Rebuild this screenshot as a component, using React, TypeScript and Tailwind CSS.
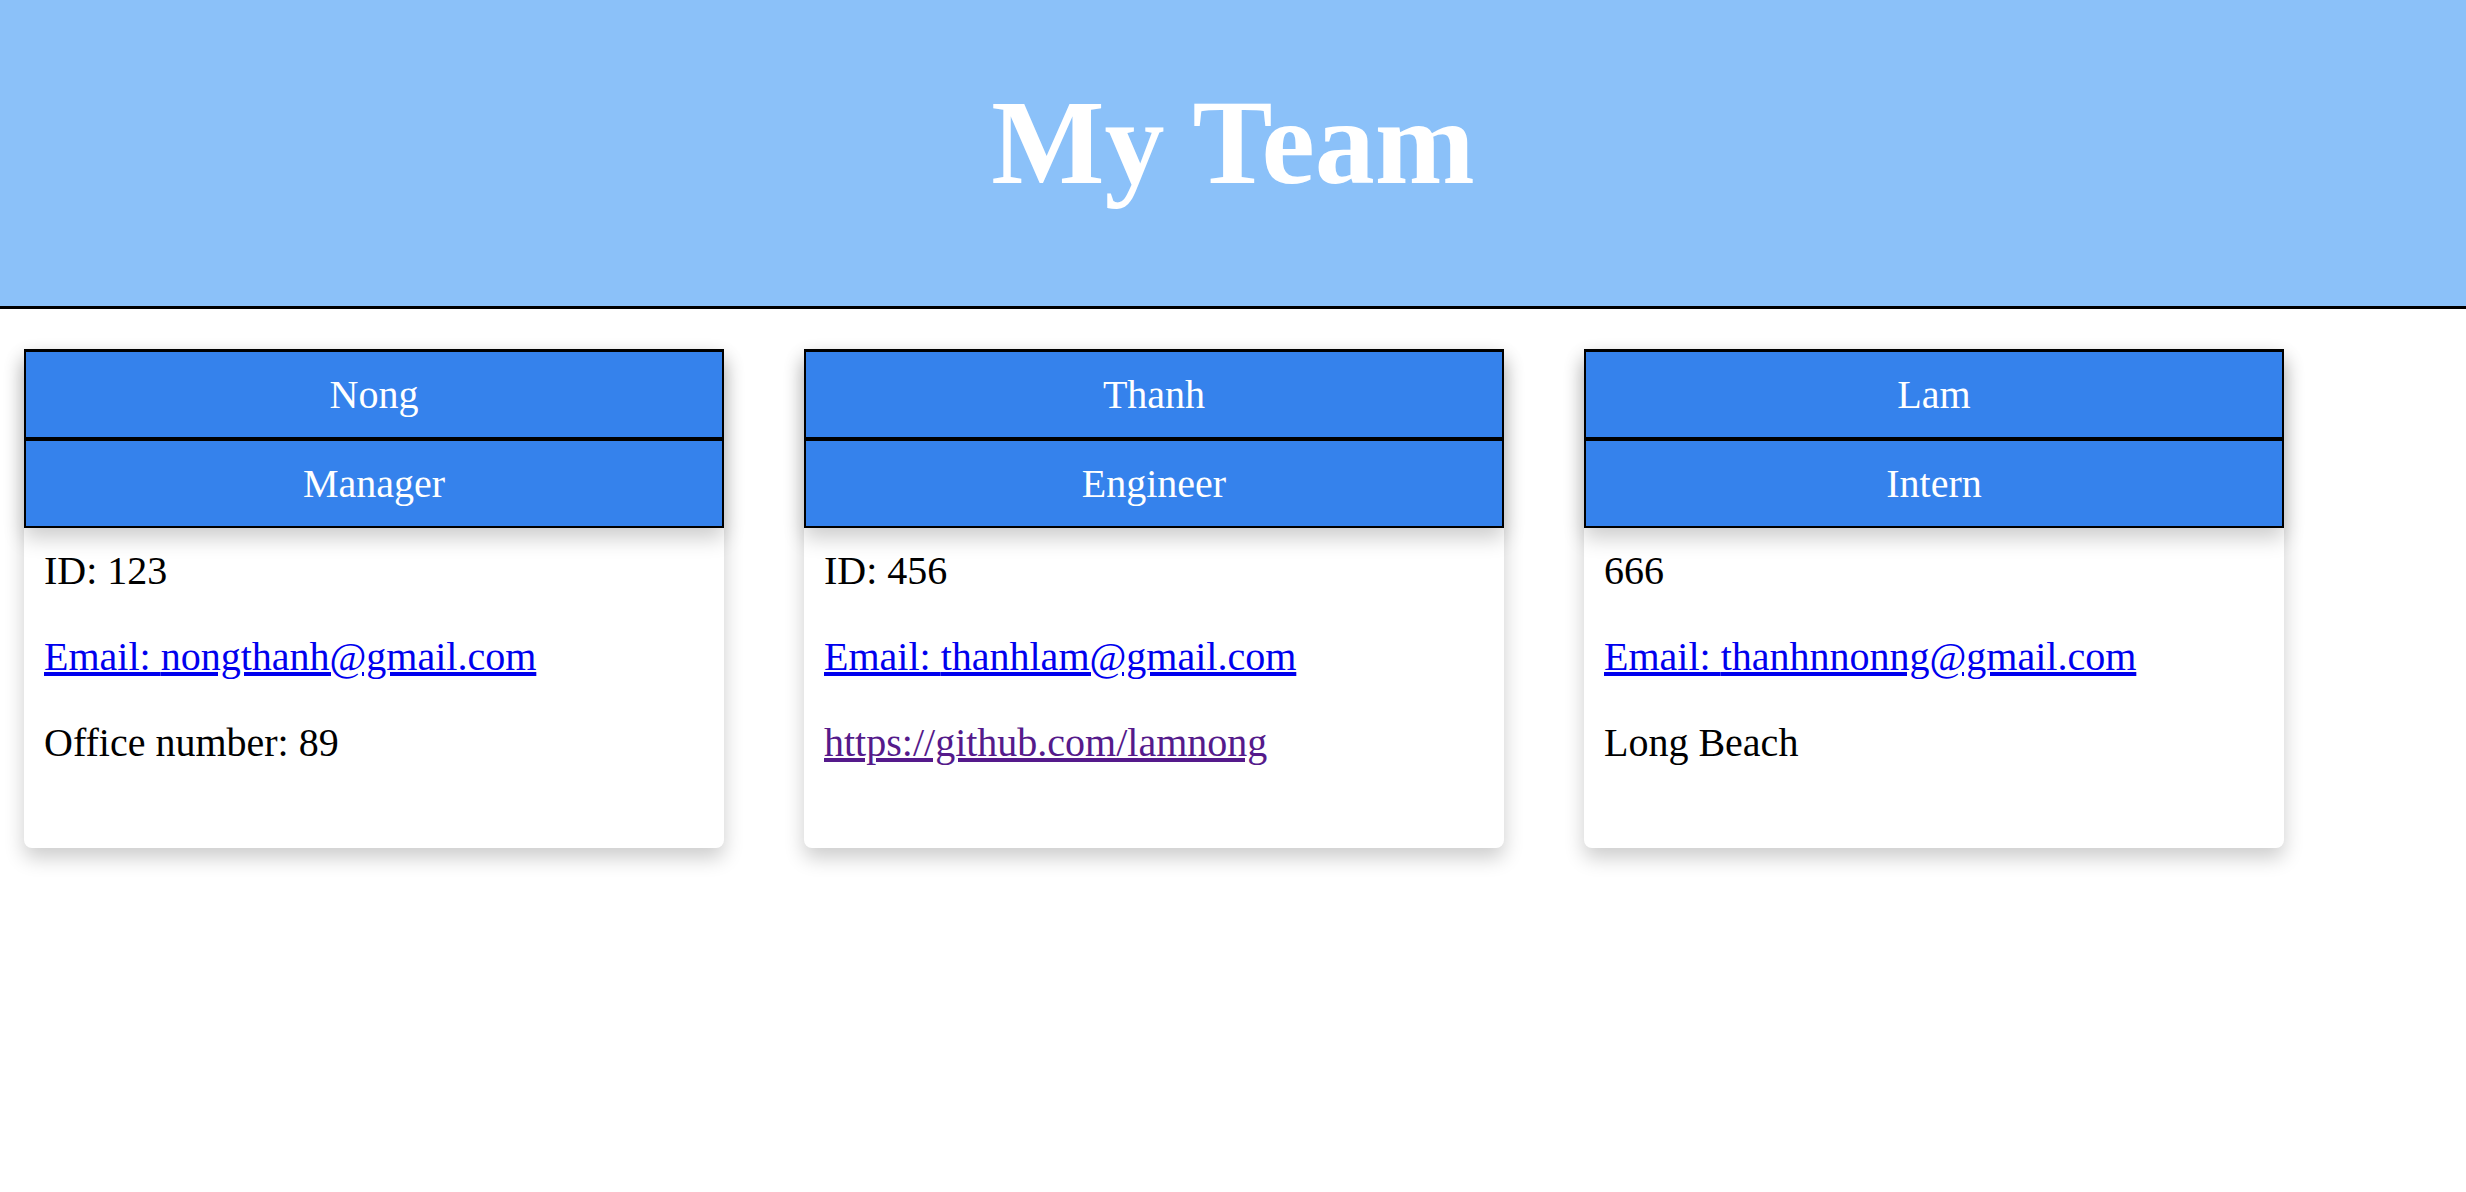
const team = [
  {
    name: "Nong",
    role: "Manager",
    id: "ID: 123",
    email: "nongthanh@gmail.com",
    extra: { text: "Office number: 89" },
  },
  {
    name: "Thanh",
    role: "Engineer",
    id: "ID: 456",
    email: "thanhlam@gmail.com",
    extra: { text: "https://github.com/lamnong", link: true },
  },
  {
    name: "Lam",
    role: "Intern",
    id: "666",
    email: "thanhnnonng@gmail.com",
    extra: { text: "Long Beach" },
  },
];

export default function App() {
  return (
    <div className="min-h-screen bg-white font-['Liberation_Serif','Times_New_Roman',serif] text-black">
      {/* Header */}
      <header className="h-[309px] border-b-[3px] border-black bg-[#8bc1f9] pt-[74px] text-center">
        <h1 className="text-[120px] font-bold leading-[1.15] text-white">My Team</h1>
      </header>

      {/* Cards */}
      <main className="flex gap-[80px] pl-[24px] pt-[40px]">
        {team.map((member) => (
          <div
            key={member.name}
            className="w-[700px] rounded-b-[8px] bg-white shadow-[0_10px_20px_rgba(0,0,0,0.2)]"
          >
            <div className="relative z-10 shadow-[0_10px_20px_rgba(0,0,0,0.2)]">
              <div className="border-x-2 border-t-[3px] border-b-2 border-black bg-[#3582ec] py-[19.5px] text-center text-[40px] leading-[46px] text-white">
                {member.name}
              </div>
              <div className="border-2 border-black bg-[#3582ec] py-[19.5px] text-center text-[40px] leading-[46px] text-white">
                {member.role}
              </div>
            </div>
            <div className="flex flex-col gap-[40px] px-[20px] pt-[20px] pb-[82px] text-[40px] leading-[46px]">
              <p>{member.id}</p>
              <p>
                <a href={`mailto:${member.email}`} className="text-[#0000ee] underline">
                  Email: {member.email}
                </a>
              </p>
              <p>
                {member.extra.link ? (
                  <a href={member.extra.text} className="text-[#551a8b] underline">
                    {member.extra.text}
                  </a>
                ) : (
                  member.extra.text
                )}
              </p>
            </div>
          </div>
        ))}
      </main>
    </div>
  );
}
